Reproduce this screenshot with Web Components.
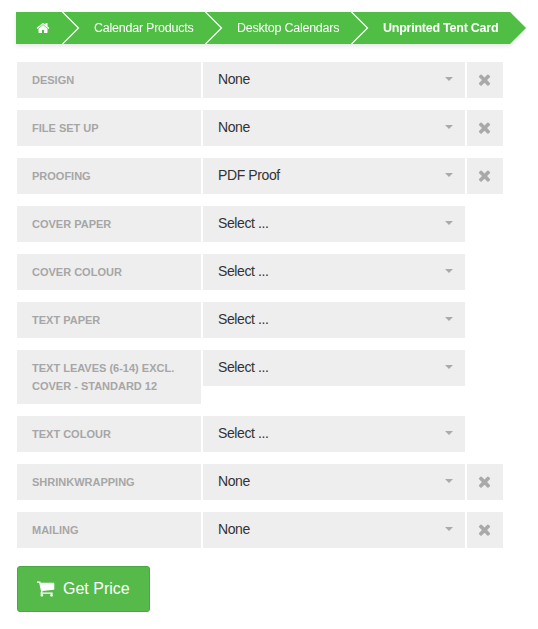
<!DOCTYPE html>
<html>
<head>
<meta charset="utf-8">
<title>Unprinted Tent Card</title>
<style>
  body { margin: 0; background: #fff; font-family: "Liberation Sans", Arial, sans-serif; }
</style>
</head>
<body>
<price-form>
  <crumb-bar>
    <crumb-item home></crumb-item>
    <crumb-item w="143">Calendar Products</crumb-item>
    <crumb-item w="146">Desktop Calendars</crumb-item>
    <crumb-item w="159" last>Unprinted Tent Card</crumb-item>
  </crumb-bar>
  <option-row label="Design" value="None" removable></option-row>
  <option-row label="File Set Up" value="None" removable></option-row>
  <option-row label="Proofing" value="PDF Proof" removable></option-row>
  <option-row label="Cover Paper" value="Select ..."></option-row>
  <option-row label="Cover Colour" value="Select ..."></option-row>
  <option-row label="Text Paper" value="Select ..."></option-row>
  <option-row label="Text Leaves (6-14) excl. cover - Standard 12" value="Select ..."></option-row>
  <option-row label="Text Colour" value="Select ..."></option-row>
  <option-row label="Shrinkwrapping" value="None" removable></option-row>
  <option-row label="Mailing" value="None" removable></option-row>
  <price-button>Get Price</price-button>
</price-form>

<script>
const GREEN = "#50bd45";

class PriceForm extends HTMLElement {
  constructor() {
    super();
    this.attachShadow({ mode: "open" }).innerHTML = `
      <style>
        :host { display: block; padding: 12px 0 17px 17px; }
      </style>
      <slot></slot>
    `;
  }
}

class CrumbBar extends HTMLElement {
  constructor() {
    super();
    this.attachShadow({ mode: "open" }).innerHTML = `
      <style>
        :host {
          display: flex;
          width: max-content;
          margin: 0 0 18px -1px;
          height: 32px;
          filter: drop-shadow(0 2px 2px rgba(0,0,0,0.10));
        }
      </style>
      <slot></slot>
    `;
  }
}

class CrumbItem extends HTMLElement {
  constructor() {
    super();
    const home = this.hasAttribute("home");
    const last = this.hasAttribute("last");
    const width = home ? 46 : this.getAttribute("w");
    this.attachShadow({ mode: "open" }).innerHTML = `
      <style>
        :host {
          display: block;
          position: relative;
          box-sizing: border-box;
          width: ${width}px;
          height: 32px;
          background: ${GREEN};
          color: #fff;
          font-size: 12.5px;
          letter-spacing: -0.24px;
          font-weight: ${last ? "bold" : "normal"};
          line-height: 32px;
          white-space: nowrap;
          padding-left: ${home ? 20 : 32}px;
        }
        svg.home { display: block; width: 14px; height: 32px; fill: #fff; }
        svg.sep {
          position: absolute; left: 0; top: 0; width: 18px; height: 32px;
          fill: none; stroke: #fff; stroke-width: 1.2;
        }
        svg.tip { position: absolute; left: 100%; top: 0; width: 16px; height: 32px; fill: ${GREEN}; }
      </style>
      ${home
        ? `<svg class="home" viewBox="0 0 1792 1792" preserveAspectRatio="xMidYMid meet"><path d="M1472 992v480q0 26-19 45t-45 19h-384v-384h-256v384h-384q-26 0-45-19t-19-45v-480q0-1 .5-3t.5-3l575-474 575 474q1 2 1 6zm223-69l-62 74q-8 9-21 11h-3q-13 0-21-7l-692-577-692 577q-12 8-24 7-13-2-21-11l-62-74q-8-10-7-23.500t11-21.500l719-599q32-26 76-26t76 26l244 204v-195q0-14 9-23t23-9h192q14 0 23 9t9 23v408l219 182q10 8 11 21.500t-7 23.500z"/></svg>`
        : `<svg class="sep" viewBox="0 0 18 32"><path d="M0.500 0L16.500 16L0.500 32"/></svg><slot></slot>`}
      ${last ? `<svg class="tip" viewBox="0 0 16 32"><path d="M0 0L16 16L0 32z"/></svg>` : ""}
    `;
  }
}

class OptionRow extends HTMLElement {
  constructor() {
    super();
    const label = this.getAttribute("label");
    const value = this.getAttribute("value");
    const removable = this.hasAttribute("removable");
    this.attachShadow({ mode: "open" }).innerHTML = `
      <style>
        :host { display: flex; align-items: flex-start; gap: 2px; margin-bottom: 12px; }
        .label {
          box-sizing: border-box;
          width: 184px;
          padding: 9px 15px;
          background: #eee;
          color: #a6a6a6;
          font-size: 11px;
          font-weight: bold;
          line-height: 18px;
          text-transform: uppercase;
        }
        .select {
          box-sizing: border-box;
          display: flex;
          align-items: center;
          justify-content: space-between;
          width: 262px;
          height: 36px;
          padding: 0 12px 2px 15px;
          background: #eee;
          color: #333;
          font-size: 14px;
          letter-spacing: -0.4px;
        }
        .arrow {
          width: 0; height: 0;
          border-left: 4px solid transparent;
          border-right: 4px solid transparent;
          border-top: 4px solid #aaa;
        }
        .remove {
          display: flex;
          align-items: center;
          justify-content: center;
          width: 36px;
          height: 36px;
          background: #eee;
        }
        .remove svg { width: 17px; height: 17px; margin: 0 1px 1px 0; fill: #a9a9a9; }
      </style>
      <div class="label">${label}</div>
      <div class="select"><span>${value}</span><i class="arrow"></i></div>
      ${removable ? `<div class="remove"><svg viewBox="0 0 1792 1792"><path d="M1490 1322q0 40-28 68l-136 136q-28 28-68 28t-68-28l-294-294-294 294q-28 28-68 28t-68-28l-136-136q-28-28-28-68t28-68l294-294-294-294q-28-28-28-68t28-68l136-136q28-28 68-28t68 28l294 294 294-294q28-28 68-28t68 28l136 136q28 28 28 68t-28 68l-294 294 294 294q28 28 28 68z"/></svg></div>` : ""}
    `;
  }
}

class PriceButton extends HTMLElement {
  constructor() {
    super();
    this.attachShadow({ mode: "open" }).innerHTML = `
      <style>
        :host { display: block; margin-top: 18px; }
        button {
          display: flex;
          align-items: center;
          gap: 8px;
          box-sizing: border-box;
          width: 133px;
          height: 46px;
          padding: 0 0 0 19px;
          background: #56ba4a;
          border: 1px solid #4aa83f;
          border-radius: 3px;
          color: #fff;
          font: 16px "Liberation Sans", Arial, sans-serif;
        }
        svg { width: 18px; height: 18px; fill: #fff; flex: none; }
      </style>
      <button>
        <svg viewBox="128 192 1664 1536"><path d="M704 1536q0 52-38 90t-90 38-90-38-38-90 38-90 90-38 90 38 38 90zm896 0q0 52-38 90t-90 38-90-38-38-90 38-90 90-38 90 38 38 90zm128-1088v512q0 24-16.500 42.500t-40.500 21.500l-1044 122q13 60 13 70 0 16-24 64h920q26 0 45 19t19 45-19 45-45 19h-1024q-26 0-45-19t-19-45q0-11 8-31.500t16-36 21.500-40 15.500-29.500l-177-823h-204q-26 0-45-19t-19-45 19-45 45-19h256q16 0 28.500 6.500t19.500 15.500 13 24.500 8 26 5.500 29.500 4.500 26h1201q26 0 45 19t19 45z"/></svg>
        <slot></slot>
      </button>
    `;
  }
}

customElements.define("price-form", PriceForm);
customElements.define("crumb-bar", CrumbBar);
customElements.define("crumb-item", CrumbItem);
customElements.define("option-row", OptionRow);
customElements.define("price-button", PriceButton);
</script>
</body>
</html>
